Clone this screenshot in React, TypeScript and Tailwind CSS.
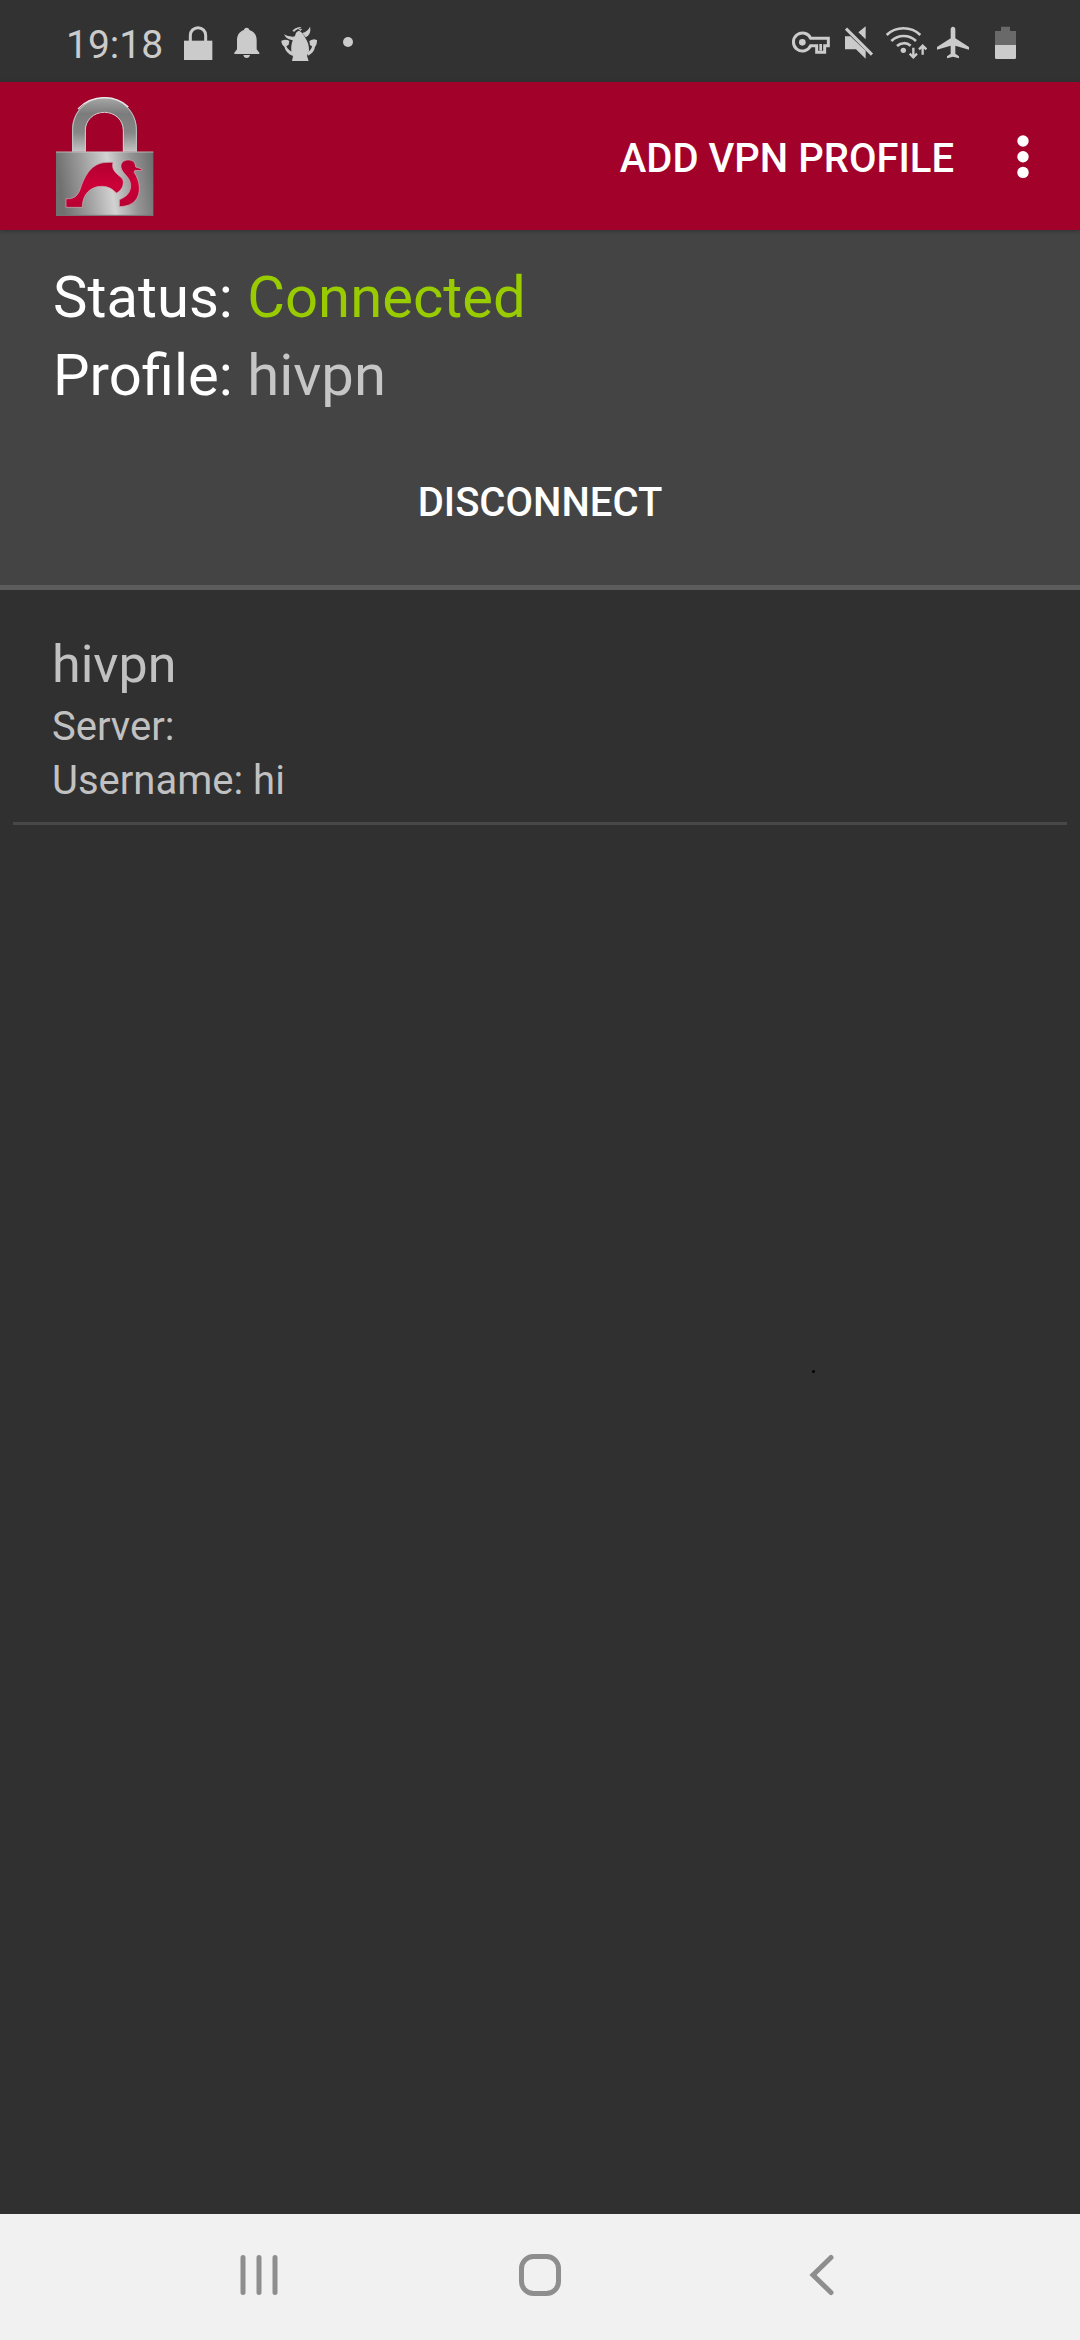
import React from 'react';

interface Profile {
  id: string;
  name: string;
  server: string;
  username: string;
}

const profiles: Profile[] = [{ id: 'hivpn', name: 'hivpn', server: '', username: 'hi' }];

const StatusBar: React.FC = () => (
  <div className="flex h-[82px] items-center justify-between bg-[#323232] pt-1 pr-12 pl-[66px] text-[#cbcbcb]">
    <div className="flex items-center gap-5">
      <span className="pt-1 text-[39px] leading-none">19:18</span>
      <svg className="h-9 w-[30px]" viewBox="429 75 90 108" fill="currentColor">
        <path d="M432 122h85v58h-85z" />
        <path d="M451 124v-18a23 23 0 0 1 46 0v18" fill="none" stroke="currentColor" strokeWidth="9" />
      </svg>
      <svg className="h-9 w-7" viewBox="583 75 84 108" fill="currentColor">
        <path d="M624 83c5 0 8 3 8 7 14 4 22 15 22 30v28l8 10v4h-75v-4l8-10v-28c0-15 8-26 21-30 0-4 3-7 8-7z" />
        <path d="M614 165h20c-1 6-5 9-10 9s-9-3-10-9z" />
      </svg>
      <svg className="h-9 w-9" viewBox="720 75 108 108" fill="currentColor">
        <path d="M773 92c9 3 16 12 20 22 7 10 12 24 11 38l-6 16 5 15h-50l3-14c-7-14-7-34 0-50l7-14c1-7 5-11 10-13z" />
        <path d="M729 103c8 5 16 6 25 7l12-1-4 12c-14 0-27-4-33-18zM807 80c3 13 0 26-13 32l-10-13c10-3 19-9 23-19zM754 93c4-7 14-11 23-12l5 3c-9 1-17 5-22 11zM772 88l12-1-6 6z" />
        <path d="M721 122l10-3 9 1 5 3-2 11-7 5c3 7 10 13 19 18v11c-14-7-23-16-25-28-6-4-9-11-9-18zM828 120l-9-2-8 2-6 3 2 12 6 4c-1 7-5 12-12 17v11c12-6 20-15 21-27 5-4 6-12 6-20z" />
      </svg>
      <svg className="h-9 w-[22px]" viewBox="0 0 22 36" fill="currentColor">
        <circle cx="11" cy="17" r="5" />
      </svg>
    </div>

    <div className="flex items-center gap-[10px]">
      <svg className="h-9 w-[38px]" viewBox="62 75 114 108" fill="none" stroke="currentColor">
        <path d="M118 115h53v22h-11v20h-24v-20h-18a27 27 0 1 1 0-22z" strokeWidth="9" />
        <path d="M148 132v20" strokeWidth="8" />
        <circle cx="93" cy="127" r="10" fill="currentColor" stroke="none" />
      </svg>
      <svg className="h-9 w-9" viewBox="207 75 108 108" fill="currentColor">
        <path d="M222 109h16l46 43v24l-29-28h-33zM284 79v39l-22-21z" />
        <path d="M225 86l78 78" fill="none" stroke="currentColor" strokeWidth="9" />
      </svg>
      <svg className="h-9 w-[41px]" viewBox="345 75 123 108" fill="none" stroke="currentColor">
        <path d="M347 105c28-27 73-27 101 0M361 123c21-20 53-20 74 0M378 138c12-11 29-11 41-1" strokeWidth="8" />
        <path d="M427 143v28M416 161l11 11 11-11M455 164v-27M444 148l11-11 11 11" strokeWidth="7" />
        <circle cx="397" cy="151" r="8" fill="currentColor" stroke="none" />
      </svg>
      <svg className="h-9 w-8" viewBox="498 75 96 108" fill="currentColor">
        <path d="M546 80c5 0 7 4 7 9v26l41 26v8l-41-12v24l11 8v6l-18-5-18 5v-6l11-8v-24l-41 12v-8l41-26V89c0-5 2-9 7-9z" />
      </svg>
      <svg className="h-9 w-[53px]" viewBox="624 75 159 108" fill="currentColor">
        <path d="M690 80h27v13h18v43h-63V93h18z" fill="#696969" />
        <path d="M672 135h63v38q0 4-4 4h-55q-4 0-4-4z" />
      </svg>
    </div>
  </div>
);

const Logo: React.FC = () => (
  <svg className="h-[121px] w-[100px]" viewBox="75 45 300 363">
    <defs>
      <linearGradient id="body" x1="0" y1="0.1" x2="1" y2="0">
        <stop offset="0" stopColor="#707070" />
        <stop offset="0.28" stopColor="#a2a2a2" />
        <stop offset="0.52" stopColor="#d2d2d2" />
        <stop offset="0.75" stopColor="#969696" />
        <stop offset="1" stopColor="#6c6c6c" />
      </linearGradient>
      <linearGradient id="shackle" x1="0" y1="0" x2="0" y2="1">
        <stop offset="0" stopColor="#a8a8a8" />
        <stop offset="0.3" stopColor="#7c7c7c" />
        <stop offset="0.65" stopColor="#868686" />
        <stop offset="1" stopColor="#c4c4c4" />
      </linearGradient>
      <linearGradient id="bird" x1="0" y1="0" x2="0" y2="1">
        <stop offset="0" stopColor="#b00030" />
        <stop offset="0.5" stopColor="#cc0038" />
        <stop offset="1" stopColor="#b80032" />
      </linearGradient>
    </defs>
    <path
      d="M126 212v-66c0-54 43-97 97-97s98 43 98 97v66h-42v-64c0-31-24-54-56-54s-56 23-56 54v64z"
      fill="url(#shackle)"
    />
    <path d="M128 212v-66c0-53 42-95 95-95s96 42 96 95v66" fill="none" stroke="#c4c4c4" strokeWidth="3" />
    <path d="M144 84c20-22 48-34 79-34 29 0 54 10 72 28" fill="none" stroke="#ececec" strokeWidth="4" />
    <path d="M280 212v-64c0-31-25-54-57-54s-57 23-57 54v64" fill="none" stroke="#d0d0d0" strokeWidth="3" />
    <path d="M78 212h292v192H78z" fill="url(#body)" />
    <path d="M78 213h292" stroke="#d6d6d6" strokeWidth="2" />
    <path d="M78 403h292" stroke="#777" strokeWidth="3" />
    <g fill="url(#bird)" stroke="#c9b4b8" strokeWidth="2">
      <path d="M108 379v-26c20 2 34-6 42-27 14-42 34-82 84-82h15c-6 25 12 34 27 48 9 11 3 36-17 44-10-10-22-20-44-20-34 0-58 24-58 63z" />
      <path d="M273 259c-2-14 8-22 22-22 14 0 21 7 22 21l19 6-1 5-20-1-3 5c20 30 22 66 3 87-10 11-28 17-47 17v-21c20-8 34-20 34-43 0-24-26-36-29-54z" />
    </g>
  </svg>
);

const Toolbar: React.FC = () => (
  <header className="relative flex h-[148px] items-center justify-between bg-[#a20229] pr-[39px] pl-[55px] shadow-[0_1px_4px_rgba(0,0,0,0.3)]">
    <Logo />
    <div className="flex items-center gap-[51px] pt-1">
      <button type="button" className="pt-px text-[40px] leading-[48px] font-medium text-white">
        ADD VPN PROFILE
      </button>
      <button type="button" aria-label="More options" className="text-white">
        <svg className="h-12 w-9" viewBox="0 0 36 48" fill="currentColor">
          <circle cx="18" cy="7" r="5.700" />
          <circle cx="18" cy="22.700" r="5.700" />
          <circle cx="18" cy="38.400" r="5.700" />
        </svg>
      </button>
    </div>
  </header>
);

const ConnectionPanel: React.FC = () => (
  <section className="border-b-[5px] border-[#5c5c5c] bg-[#444444] px-[53px] pt-7 pb-[33px]">
    <p className="text-[58px] leading-[78px] text-white">
      Status: <span className="text-[#99cc00]">Connected</span>
    </p>
    <p className="text-[58px] leading-[78px] text-white">
      Profile: <span className="text-[#c6c6c6]">hivpn</span>
    </p>
    <button type="button" className="mt-10 block h-[98px] w-full text-[40px] font-medium text-white">
      DISCONNECT
    </button>
  </section>
);

const ProfileRow: React.FC<{ profile: Profile }> = ({ profile }) => (
  <li className="border-b-[3px] border-[#484848] px-[39px] pt-10 pb-[14px] text-[#c1c1c1]">
    <h2 className="text-[52px] leading-[70px]">{profile.name}</h2>
    <p className="text-[40px] leading-[54px]">Server: {profile.server}</p>
    <p className="text-[40px] leading-[54px]">Username: {profile.username}</p>
  </li>
);

const NavBar: React.FC = () => (
  <nav className="flex h-[126px] justify-center bg-[#f1f1f1] pb-1 text-[#8e8e8e]">
    <button type="button" aria-label="Recents" className="flex w-[26%] items-center justify-center">
      <svg className="h-11 w-11" viewBox="0 0 44 44" fill="none" stroke="currentColor" strokeWidth="5" strokeLinecap="round">
        <path d="M6 4.500v35M22 4.500v35M38 4.500v35" />
      </svg>
    </button>
    <button type="button" aria-label="Home" className="flex w-[26%] items-center justify-center">
      <svg className="h-11 w-11" viewBox="0 0 44 44" fill="none" stroke="currentColor" strokeWidth="5">
        <rect x="3.500" y="3.500" width="37" height="37" rx="12" />
      </svg>
    </button>
    <button type="button" aria-label="Back" className="flex w-[26%] items-center justify-center">
      <svg className="h-11 w-11" viewBox="0 0 44 44" fill="none" stroke="currentColor" strokeWidth="5" strokeLinecap="round">
        <path d="M32 4.500L14 22l18 17.500" />
      </svg>
    </button>
  </nav>
);

export default function App() {
  return (
    <div className="flex min-h-screen flex-col bg-[#303030] font-[Roboto,sans-serif]">
      <StatusBar />
      <Toolbar />
      <ConnectionPanel />
      <main className="relative flex-1 px-[13px]">
        <ul>
          {profiles.map(profile => (
            <ProfileRow key={profile.id} profile={profile} />
          ))}
        </ul>
        <span className="absolute top-[48%] left-[75.2%] h-[3px] w-[3px] rounded-full bg-black" />
      </main>
      <NavBar />
    </div>
  );
}
